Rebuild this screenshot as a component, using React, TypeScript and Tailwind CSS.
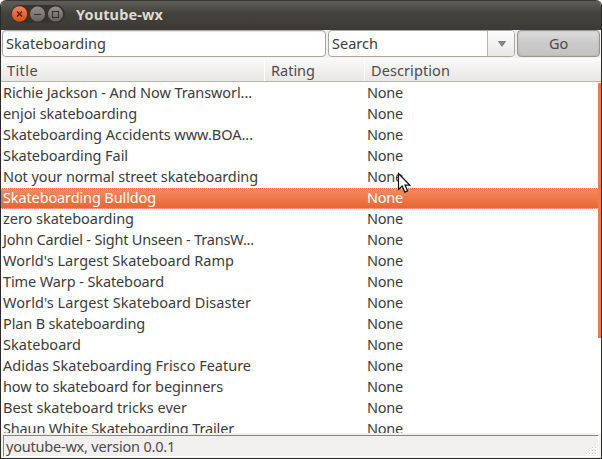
import { useLayoutEffect, useRef, useState } from "react";

type LabelProps = { text: string; width: number; className?: string };

/** Single line of text whose tracking is adjusted to fill a given width. */
function Label({ text, width, className = "" }: LabelProps) {
  const ref = useRef<HTMLSpanElement>(null);
  const [spacing, setSpacing] = useState(0);
  useLayoutEffect(() => {
    const el = ref.current;
    if (!el) return;
    el.style.letterSpacing = "0px";
    const natural = el.getBoundingClientRect().width;
    const next = (width - natural) / text.length;
    el.style.letterSpacing = `${next}px`;
    setSpacing(next);
  }, [text, width]);
  return (
    <span ref={ref} className={`block w-max whitespace-pre ${className}`} style={{ letterSpacing: `${spacing}px` }}>
      {text}
    </span>
  );
}

const videos: { title: string; width: number }[] = [
  { title: "Richie Jackson - And Now Transworl...", width: 249 },
  { title: "enjoi skateboarding", width: 134 },
  { title: "Skateboarding Accidents www.BOA...", width: 250 },
  { title: "Skateboarding Fail", width: 125 },
  { title: "Not your normal street skateboarding", width: 255 },
  { title: "Skateboarding Bulldog", width: 153 },
  { title: "zero skateboarding", width: 131 },
  { title: "John Cardiel - Sight Unseen - TransW...", width: 251 },
  { title: "World's Largest Skateboard Ramp", width: 231 },
  { title: "Time Warp - Skateboard", width: 161 },
  { title: "World's Largest Skateboard Disaster", width: 248 },
  { title: "Plan B skateboarding", width: 142 },
  { title: "Skateboard", width: 78 },
  { title: "Adidas Skateboarding Frisco Feature", width: 248 },
  { title: "how to skateboard for beginners", width: 220 },
  { title: "Best skateboard tricks ever", width: 184 },
  { title: "Shaun White Skateboarding Trailer", width: 231 },
];

const selected = 5;

function TitleBar() {
  return (
    <header className="flex h-[30px] shrink-0 items-center rounded-t-[5px] border-t border-[#383733] bg-linear-to-b from-[#5b5a54] from-5% via-[#42413c] via-45% to-[#3b3a35] pb-[3px] pl-[10px]">
      <div className="flex h-[18px] items-center rounded-full bg-[#35342f]">
        <svg width="54" height="18" viewBox="0 0 54 18" fill="none">
          <defs>
            <linearGradient id="close" x1="0" y1="0" x2="0" y2="1">
              <stop offset="0" stopColor="#f58454" />
              <stop offset="1" stopColor="#dc4d16" />
            </linearGradient>
            <linearGradient id="grey" x1="0" y1="0" x2="0" y2="1">
              <stop offset="0" stopColor="#92908a" />
              <stop offset="1" stopColor="#66645d" />
            </linearGradient>
          </defs>
          <circle cx="8.5" cy="9" r="7.7" fill="url(#close)" />
          <circle cx="26.5" cy="9" r="7.5" fill="url(#grey)" />
          <circle cx="44.5" cy="9" r="7.5" fill="url(#grey)" />
          <path d="M6 6.5l5 5M11 6.5l-5 5" stroke="#3d2117" strokeWidth="1.2" />
          <path d="M23 9.5h7" stroke="#34332e" strokeWidth="1.2" />
          <rect x="41.5" y="6.5" width="6" height="6" stroke="#34332e" strokeWidth="1.1" />
        </svg>
      </div>
      <h1 className="ml-[11px] pb-px text-[14.5px] leading-[18px] font-bold text-[#dfdbd2]">
        <Label text="Youtube-wx" width={87} />
      </h1>
    </header>
  );
}

function Toolbar() {
  return (
    <div className="flex h-[28px] shrink-0 bg-[#f1f0ee] pl-px text-[#3c3c3c]">
      <div className="flex h-[27px] w-[324px] items-center rounded-[4px] border border-[#aaa7a2] bg-white pb-[2px] pl-[3px] shadow-[inset_0_1px_1px_#e5e4e2]">
        <Label text="Skateboarding" width={100} />
      </div>
      <div className="ml-[2px] flex h-[27px] w-[187px] overflow-hidden rounded-[4px] border border-[#aaa7a2] bg-white">
        <div className="flex flex-1 items-center pb-[2px] pl-[3px]">
          <Label text="Search" width={46} />
        </div>
        <div className="flex w-[27px] items-center justify-center border-l border-[#b8b5b0] bg-linear-to-b from-[#fcfcfc] to-[#e9e8e7] pt-px pl-px">
          <svg width="8" height="6" viewBox="0 0 8 6">
            <path d="M.5 .5h7L4 5.3z" fill="#8b8b8b" stroke="#6b6b6b" strokeWidth=".8" />
          </svg>
        </div>
      </div>
      <div className="ml-[2px] flex h-[27px] w-[83px] items-center justify-center rounded-[4px] border border-[#999692] bg-linear-to-b from-[#dedddd] via-[#cacaca] to-[#c3c3c3] pb-[2px] text-[#4c4c4c] shadow-[inset_0_0_2px_#aaa]">
        <Label text="Go" width={19} />
      </div>
    </div>
  );
}

function ColumnHeaders() {
  return (
    <div className="flex h-[24px] shrink-0 border-b border-[#b6b5ad] bg-linear-to-b from-[#fafafa] to-[#e8e7e5] text-[#4c4c4c]">
      <div className="flex w-[264px] items-center border-r border-white pl-[6px]">
        <Label text="Title" width={31} />
      </div>
      <div className="flex w-[100px] items-center border-r border-white pl-[6px]">
        <Label text="Rating" width={44} />
      </div>
      <div className="flex items-center pl-[6px]">
        <Label text="Description" width={79} />
      </div>
    </div>
  );
}

function VideoList() {
  return (
    <div className="flex h-[351px] shrink-0 overflow-hidden bg-white pt-px text-[#3c3c3c]">
      <div className="flex-1">
        {videos.map((v, i) => (
          <div
            key={v.title}
            className={
              i === selected
                ? "flex h-[21px] items-start border-y border-dotted border-[#fde0d3] bg-linear-to-b from-[#f78a5d] to-[#e76632] leading-[16px] text-white"
                : "flex h-[21px] items-start leading-[18px]"
            }
          >
            <div className="w-[364px] pl-[2px]">
              <Label text={v.title} width={v.width} />
            </div>
            <div className="pl-[2px]">
              <Label text="None" width={36} />
            </div>
          </div>
        ))}
      </div>
      <div className="h-[255px] w-[3px] bg-[#f37b4a]" />
    </div>
  );
}

function StatusBar() {
  return (
    <footer className="h-[25px] shrink-0 bg-[#f1f0ee] pt-[2px] pr-[2px] pl-[2px]">
      <div className="flex h-[22px] items-center justify-between border-t border-r border-b border-l border-t-[#888784] border-r-white border-b-white border-l-[#888784] pl-[2px] text-[#4c4c4c]">
        <Label text="youtube-wx, version 0.0.1" width={169} />
        <svg width="12" height="12" viewBox="0 0 12 12" className="mt-[7px]">
          {[
            [10, 0], [7, 3], [10, 3], [4, 6], [7, 6], [10, 6], [1, 9], [4, 9], [7, 9], [10, 9],
          ].map(([x, y]) => (
            <g key={`${x}-${y}`}>
              <rect x={x - 1} y={y} width="2" height="2" fill="#fff" />
              <rect x={x - 1} y={y} width="1" height="1" fill="#d2d0cd" />
            </g>
          ))}
        </svg>
      </div>
    </footer>
  );
}

export default function App() {
  return (
    <div className="relative h-[459px] w-[602px] overflow-hidden bg-white font-['Noto_Sans','Open_Sans',sans-serif] text-[14.5px] leading-[20px]">
      <div className="flex h-full flex-col overflow-hidden rounded-t-[6px] border-x border-b border-[#2b2a29] bg-[#f1f0ee]">
        <TitleBar />
        <Toolbar />
        <ColumnHeaders />
        <VideoList />
        <StatusBar />
      </div>
      <svg className="absolute top-[172px] left-[397px]" width="14" height="22" viewBox="0 0 14 22">
        <path d="M1.5 1.5v16l3.7-3.4 2.6 6 2.8-1.2-2.6-5.8h4.7z" fill="#fff" stroke="#111" strokeWidth="1.2" />
      </svg>
    </div>
  );
}
